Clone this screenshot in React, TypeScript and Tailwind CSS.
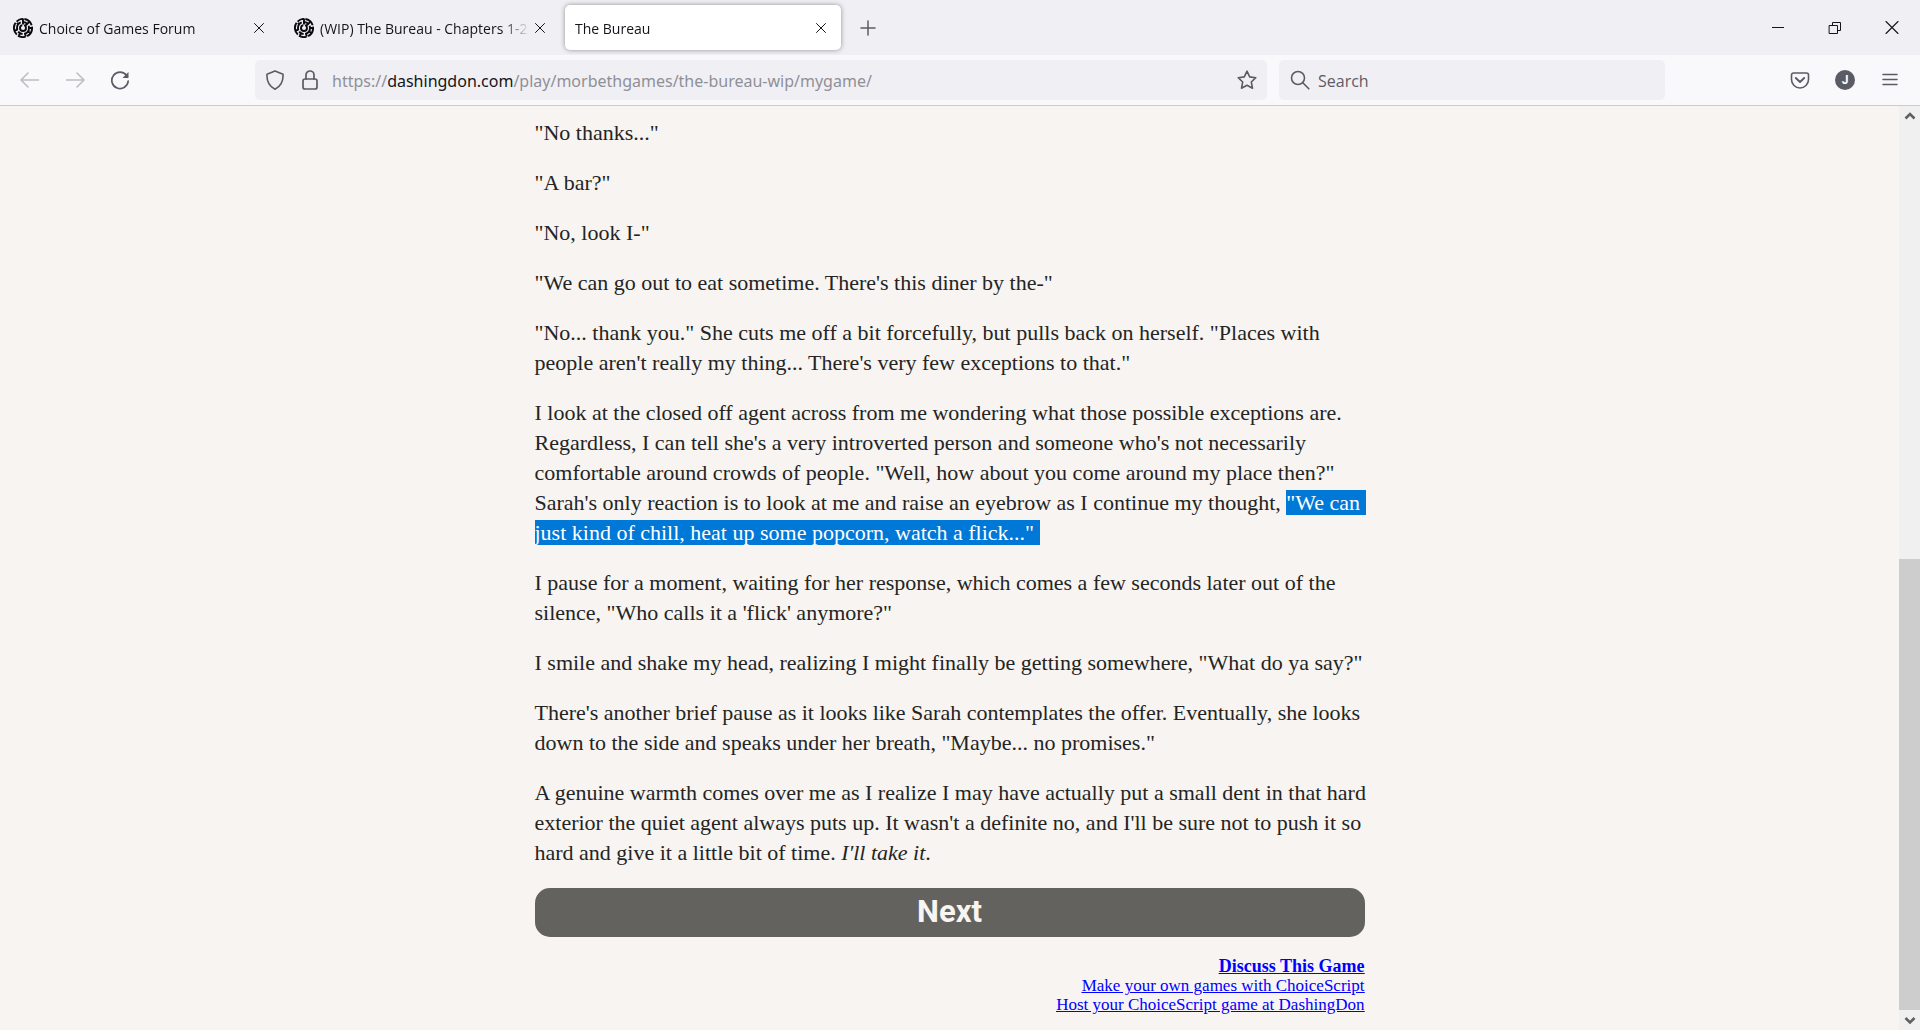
import type { ReactNode, SVGProps } from 'react';
import clsx from 'clsx';

function Icon({ children, ...props }: SVGProps<SVGSVGElement>) {
  return (
    <svg
      width="20"
      height="20"
      viewBox="0 0 20 20"
      fill="none"
      stroke="currentColor"
      strokeWidth="1.5"
      strokeLinecap="round"
      strokeLinejoin="round"
      aria-hidden="true"
      className="shrink-0"
      {...props}
    >
      {children}
    </svg>
  );
}

// Round labyrinth logo
function MazeIcon() {
  return (
    <Icon strokeWidth="1.9" strokeLinecap="butt" stroke="#0b0b0d">
      <circle cx="10" cy="10" r="9.1" strokeDasharray="10 1.5 8 1.5 13 1.5 7 1.5" />
      <circle cx="10" cy="10" r="6" strokeDasharray="8 1.6 5 1.6 9 1.6 6 1.6" />
      <circle cx="10" cy="10" r="3" strokeDasharray="13 2" />
      <path d="M10 .5v6M3.800 5l2.200 1.600M16.500 3.500l-2.200 2.300M16 10h3M1 12.500l3.500-.6M15 13.500l2.500 1.600M6 17.500l1.300-3M12.800 18.500l-.8-3M12 8l2.500-2.500" />
    </Icon>
  );
}

interface TabProps {
  title: string;
  icon?: ReactNode;
  active?: boolean;
}

function Tab({ title, icon, active = false }: TabProps) {
  return (
    <div
      className={clsx(
        'flex h-[45px] w-[276px] items-center gap-[6px] rounded-[5px] px-[10px]',
        active && 'bg-white shadow-[0_0_5px_rgba(0,0,0,0.4)]',
      )}
    >
      <button type="button" className="flex min-w-0 flex-1 items-center gap-[6px] text-left">
        {icon}
        <span className="flex-1 overflow-hidden pt-[2px] text-sm whitespace-nowrap [mask-image:linear-gradient(to_left,transparent,black_28px)]">
          {title}
        </span>
      </button>
      <button type="button" aria-label={`Close ${title}`} className="-ml-[6px]">
        <Icon strokeWidth="1">
          <path d="M5.500 5.500l9 9M14.500 5.500l-9 9" />
        </Icon>
      </button>
    </div>
  );
}

function TabStrip() {
  return (
    <header className="flex h-[55px] shrink-0 items-center bg-[#f0f0f4] pl-[3px]">
      <nav aria-label="Tabs" className="flex flex-1 items-center gap-[5px]">
        <Tab title="Choice of Games Forum" icon={<MazeIcon />} />
        <Tab title="(WIP) The Bureau - Chapters 1-2" icon={<MazeIcon />} />
        <Tab title="The Bureau" active />
        <button type="button" aria-label="New tab" className="ml-3 text-[#5b5b66]">
          <Icon>
            <path d="M10 3v14M3 10h14" />
          </Icon>
        </button>
      </nav>
      <div className="flex">
        <button type="button" aria-label="Minimize" className="flex w-[57px] justify-center">
          <Icon strokeWidth="1" strokeLinecap="butt">
            <path d="M4 9.500h12" />
          </Icon>
        </button>
        <button type="button" aria-label="Restore" className="flex w-[57px] justify-center">
          <Icon strokeWidth="1" strokeLinejoin="miter">
            <path d="M4.500 7.500h8v8h-8zM7.500 7.500v-3h8v8h-3" />
          </Icon>
        </button>
        <button type="button" aria-label="Close window" className="flex w-[57px] justify-center">
          <Icon strokeWidth="1.1">
            <path d="M4 3.500l12 12M16 3.500l-12 12" />
          </Icon>
        </button>
      </div>
    </header>
  );
}

function Toolbar() {
  return (
    <div className="flex h-[51px] shrink-0 items-center border-b border-[#cccccc] bg-[#f9f9fb] px-5 text-[#5b5b66]">
      <div className="flex w-[235px] shrink-0 gap-[25px]">
        <button type="button" aria-label="Back" disabled className="text-[#bcbcc2]">
          <Icon>
            <path d="M1.500 10h17M8 3l-7 7 7 7" />
          </Icon>
        </button>
        <button type="button" aria-label="Forward" disabled className="text-[#bcbcc2]">
          <Icon>
            <path d="M1.500 10h17M12 3l7 7-7 7" />
          </Icon>
        </button>
        <button type="button" aria-label="Reload">
          <Icon strokeWidth="1.7">
            <path d="M16.600 5.500A8.200 8.200 0 1 0 18.200 11" />
            <path d="M18.500 2v6h-6z" fill="currentColor" stroke="none" />
          </Icon>
        </button>
      </div>
      <div className="flex h-10 min-w-0 flex-1 items-center rounded-[5px] bg-[#f0f0f4] px-[10px]">
        <button type="button" aria-label="Tracking protection">
          <Icon strokeWidth="1.6">
            <path d="M10 1l8 3.200c.400 6.500-2 12-8 15-6-3-8.400-8.500-8-15z" />
          </Icon>
        </button>
        <button type="button" aria-label="Connection secure" className="ml-[15px]">
          <Icon strokeWidth="1.7">
            <rect x="3" y="9" width="14" height="10" rx="2" />
            <path d="M6 9V5a4 4 0 0 1 8 0v4" />
          </Icon>
        </button>
        <div className="relative ml-3 min-w-0 flex-1 pt-[2px] font-['Noto_Sans',sans-serif] text-base">
          <input
            aria-label="Address"
            defaultValue="https://dashingdon.com/play/morbethgames/the-bureau-wip/mygame/"
            className="absolute inset-0 w-full bg-transparent text-transparent outline-none"
          />
          <div aria-hidden="true" className="pointer-events-none truncate text-[#8f8f98]">
            https://<span className="text-[#15141a]">dashingdon.com</span>/play/morbethgames/the-bureau-wip/mygame/
          </div>
        </div>
        <button type="button" aria-label="Bookmark this page">
          <Icon strokeWidth="1.6">
            <path d="M10 1.200l2.700 5.700 6.100.800-4.500 4.300 1.200 6.200-5.500-3-5.500 3 1.200-6.200L1.200 7.700l6.100-.800z" />
          </Icon>
        </button>
      </div>
      <label className="ml-3 flex h-10 w-[386px] items-center gap-2 rounded-[5px] bg-[#f0f0f4] px-[11px]">
        <Icon strokeWidth="1.6">
          <circle cx="8" cy="8" r="6.500" />
          <path d="M12.800 12.800l6 6" />
        </Icon>
        <input
          aria-label="Search"
          placeholder="Search"
          className="min-w-0 flex-1 bg-transparent pt-[2px] text-base outline-none placeholder:text-[#5b5b66]"
        />
      </label>
      <div className="ml-[125px] flex gap-[25px]">
        <button type="button" aria-label="Save to Pocket">
          <Icon strokeWidth="1.6">
            <path d="M3.500 3h13a2 2 0 0 1 2 2v4.500a8.500 8.500 0 0 1-17 0V5a2 2 0 0 1 2-2z" />
            <path d="M5.800 8l4.200 4 4.200-4" strokeWidth="1.9" />
          </Icon>
        </button>
        <button
          type="button"
          aria-label="Account"
          className="flex size-5 items-center justify-center rounded-full bg-[#5b5b66] font-['Roboto',sans-serif] text-xs font-bold text-white"
        >
          J
        </button>
        <button type="button" aria-label="Open menu">
          <Icon>
            <path d="M3 4.500h14M3 9.500h14M3 14.500h14" />
          </Icon>
        </button>
      </div>
    </div>
  );
}

function Story() {
  return (
    <article className="flex flex-col gap-5 text-[22px] leading-[30px] lg:whitespace-nowrap">
      <p>"No thanks..."</p>
      <p>"A bar?"</p>
      <p>"No, look I-"</p>
      <p>"We can go out to eat sometime. There's this diner by the-"</p>
      <p>
        "No... thank you." She cuts me off a bit forcefully, but pulls back on herself. "Places with
        <br />
        people aren't really my thing... There's very few exceptions to that."
      </p>
      <p>
        I look at the closed off agent across from me wondering what those possible exceptions are.
        <br />
        Regardless, I can tell she's a very introverted person and someone who's not necessarily
        <br />
        comfortable around crowds of people. "Well, how about you come around my place then?"
        <br />
        Sarah's only reaction is to look at me and raise an eyebrow as I continue my thought,{' '}
        <mark className="bg-[#0078d7] text-white">
          "We can&nbsp;
          <br />
          just kind of chill, heat up some popcorn, watch a flick..."&nbsp;
        </mark>
      </p>
      <p>
        I pause for a moment, waiting for her response, which comes a few seconds later out of the
        <br />
        silence, "Who calls it a 'flick' anymore?"
      </p>
      <p>I smile and shake my head, realizing I might finally be getting somewhere, "What do ya say?"</p>
      <p>
        There's another brief pause as it looks like Sarah contemplates the offer. Eventually, she looks
        <br />
        down to the side and speaks under her breath, "Maybe... no promises."
      </p>
      <p>
        A genuine warmth comes over me as I realize I may have actually put a small dent in that hard
        <br />
        exterior the quiet agent always puts up. It wasn't a definite no, and I'll be sure not to push it so
        <br />
        hard and give it a little bit of time. <em>I'll take it</em>.
      </p>
    </article>
  );
}

function Scrollbar() {
  return (
    <div aria-hidden="true" className="flex w-[21px] shrink-0 flex-col items-center bg-[#f0f0f0] text-[#606060]">
      <Icon strokeWidth="2.6" strokeLinecap="butt" strokeLinejoin="miter">
        <path d="M5.500 12.500l4.500-4.500 4.500 4.500" />
      </Icon>
      <div className="flex w-full flex-1 flex-col justify-end">
        <div className="h-[51%] bg-[#cdcdcd]" />
      </div>
      <Icon strokeWidth="2.6" strokeLinecap="butt" strokeLinejoin="miter">
        <path d="M5.500 8l4.500 4.500 4.500-4.500" />
      </Icon>
    </div>
  );
}

export default function App() {
  return (
    <div className="flex h-screen flex-col bg-[#f7f4f1] font-['Open_Sans','Noto_Sans',sans-serif] text-[#15141a]">
      <TabStrip />
      <Toolbar />
      <div className="flex min-h-0 flex-1">
        <main className="flex-1 overflow-hidden px-4 pt-3 font-['Liberation_Serif',serif] text-[#242424]">
          <div className="mx-auto max-w-[830px]">
            <Story />
            <button
              type="button"
              className="mt-5 block h-[49px] w-full rounded-[15px] bg-[#63625f] font-['Roboto',sans-serif] text-[31px] font-bold text-[#f7f4f1]"
            >
              Next
            </button>
            <footer className="mt-5 flex flex-col items-end text-[17px] leading-[19px] text-[#0000ff] underline">
              <a href="#discuss" className="text-[18px] leading-[19px] font-bold">Discuss This Game</a>
              <a href="#choicescript">Make your own games with ChoiceScript</a>
              <a href="#dashingdon">Host your ChoiceScript game at DashingDon</a>
            </footer>
          </div>
        </main>
        <Scrollbar />
      </div>
    </div>
  );
}
